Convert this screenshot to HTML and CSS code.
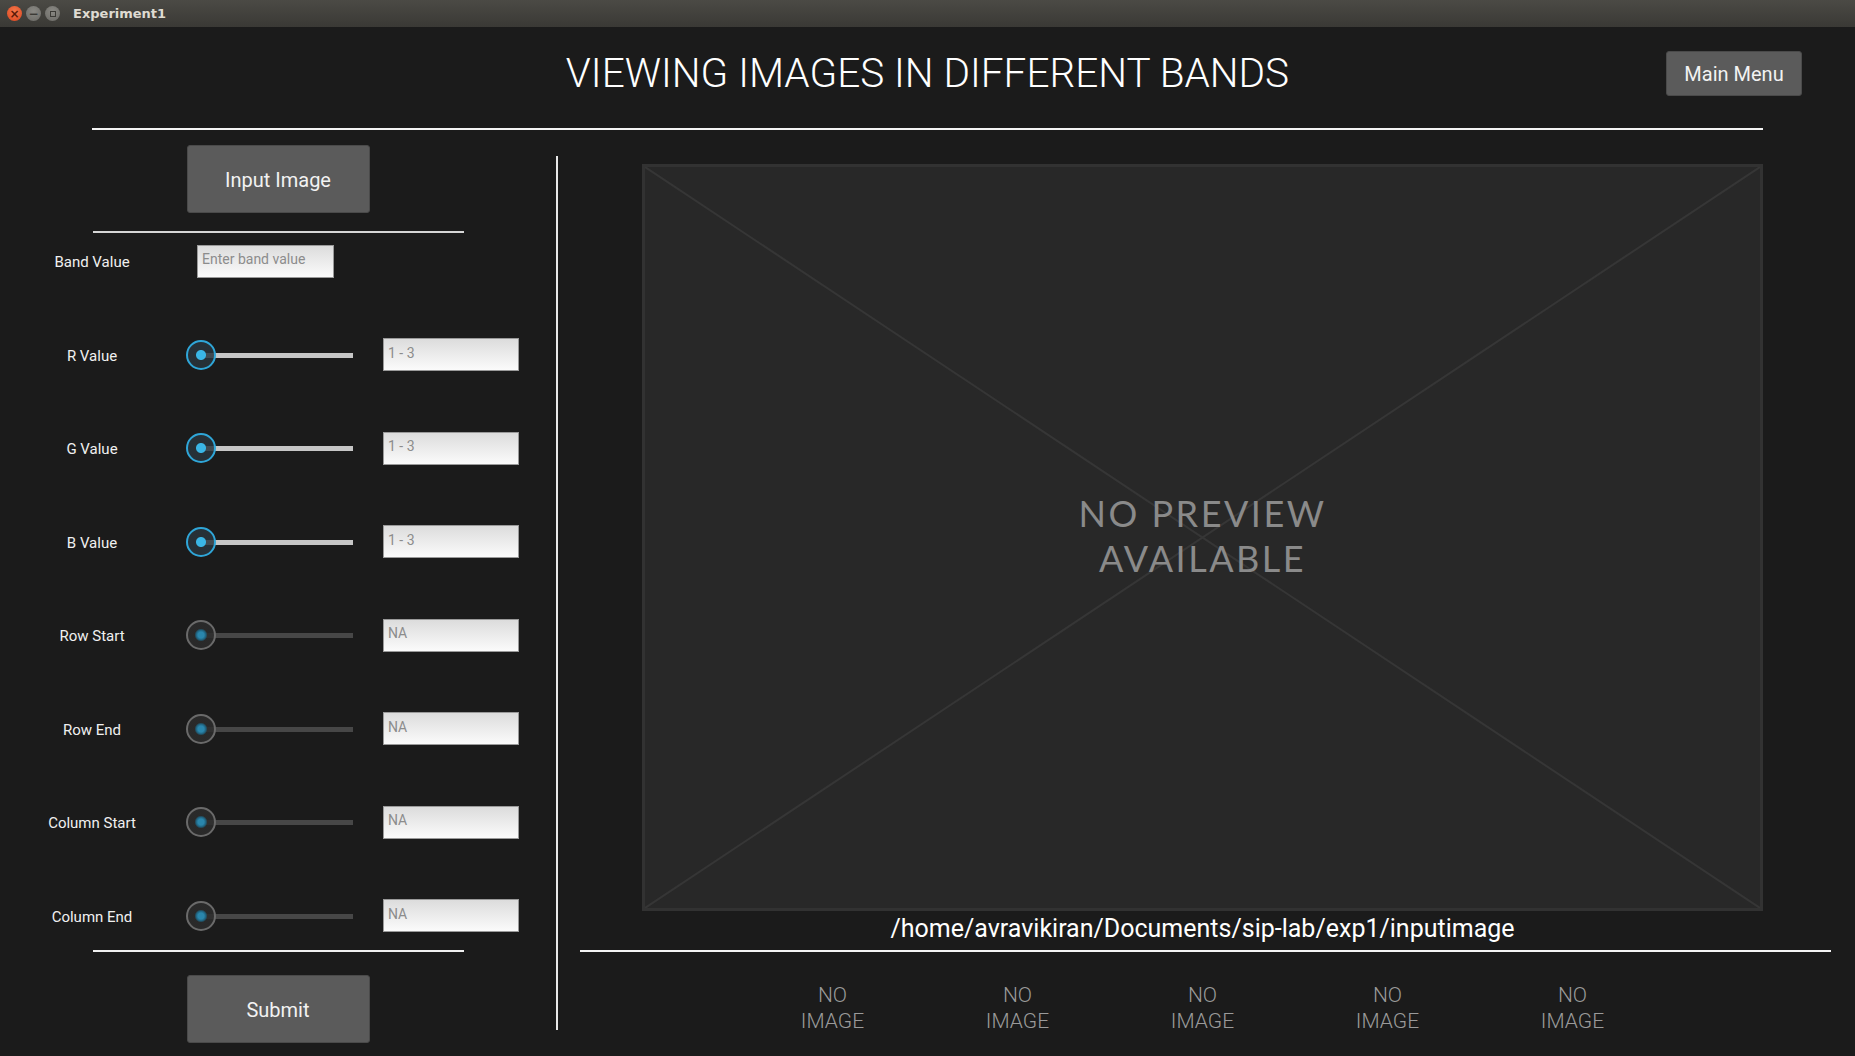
FILE: index.html
```html
<!DOCTYPE html>
<html lang="en">
<head>
    <meta charset="UTF-8">
    <title>Experiment1</title>
    <link rel="stylesheet" href="styles.css">
</head>
<body>
    <div class="titlebar">
        <div class="wbtn close">&times;</div>
        <div class="wbtn min">&minus;</div>
        <div class="wbtn max"><span class="sq"></span></div>
        <span class="wtitle">Experiment1</span>
    </div>

    <div class="app">
        <div class="header">
            <h1 class="title">VIEWING IMAGES IN DIFFERENT BANDS</h1>
            <button class="btn menu-btn">Main Menu</button>
        </div>
        <div class="hline"></div>

        <div class="main">
            <div class="left">
                <button class="btn big-btn">Input Image</button>
                <div class="sep"></div>

                <div class="rows">
                    <div class="row">
                        <span class="label">Band Value</span>
                        <input class="field band" placeholder="Enter band value">
                    </div>
                    <div class="row">
                        <span class="label">R Value</span>
                        <div class="slider"><div class="track"></div><div class="thumb"></div></div>
                        <input class="field" placeholder="1 - 3">
                    </div>
                    <div class="row">
                        <span class="label">G Value</span>
                        <div class="slider"><div class="track"></div><div class="thumb"></div></div>
                        <input class="field" placeholder="1 - 3">
                    </div>
                    <div class="row">
                        <span class="label">B Value</span>
                        <div class="slider"><div class="track"></div><div class="thumb"></div></div>
                        <input class="field" placeholder="1 - 3">
                    </div>
                    <div class="row">
                        <span class="label">Row Start</span>
                        <div class="slider off"><div class="track"></div><div class="thumb"></div></div>
                        <input class="field" placeholder="NA">
                    </div>
                    <div class="row">
                        <span class="label">Row End</span>
                        <div class="slider off"><div class="track"></div><div class="thumb"></div></div>
                        <input class="field" placeholder="NA">
                    </div>
                    <div class="row">
                        <span class="label">Column Start</span>
                        <div class="slider off"><div class="track"></div><div class="thumb"></div></div>
                        <input class="field" placeholder="NA">
                    </div>
                    <div class="row">
                        <span class="label">Column End</span>
                        <div class="slider off"><div class="track"></div><div class="thumb"></div></div>
                        <input class="field" placeholder="NA">
                    </div>
                </div>

                <div class="sep bottom"></div>
                <button class="btn big-btn">Submit</button>
            </div>

            <div class="vline"></div>

            <div class="right">
                <div class="preview">
                    <svg class="cross" viewBox="0 0 100 100" preserveAspectRatio="none">
                        <line x1="0" y1="0" x2="100" y2="100" vector-effect="non-scaling-stroke"/>
                        <line x1="100" y1="0" x2="0" y2="100" vector-effect="non-scaling-stroke"/>
                    </svg>
                    <div class="nopreview">NO PREVIEW<br>AVAILABLE</div>
                </div>
                <div class="path">/home/avravikiran/Documents/sip-lab/exp1/inputimage</div>
                <div class="hline2"></div>
                <div class="thumbs">
                    <div class="noimg">NO<br>IMAGE</div>
                    <div class="noimg">NO<br>IMAGE</div>
                    <div class="noimg">NO<br>IMAGE</div>
                    <div class="noimg">NO<br>IMAGE</div>
                    <div class="noimg">NO<br>IMAGE</div>
                </div>
            </div>
        </div>
    </div>
</body>
</html>
```

FILE: styles.css
```css
body {
    margin: 0;
    overflow: hidden;
    background: #1b1b1b;
    font-family: Roboto, "Liberation Sans", sans-serif;
    color: #f0f0f0;
}

.titlebar {
    height: 27px;
    display: flex;
    align-items: center;
    background: linear-gradient(#4b4a45, #3a3935);
    padding-left: 7px;
}
.wbtn {
    width: 15px;
    height: 15px;
    border-radius: 50%;
    margin-right: 4px;
    display: flex;
    align-items: center;
    justify-content: center;
    font: bold 12px "DejaVu Sans", sans-serif;
    color: #3b3a36;
    line-height: 1;
}
.wbtn.close { background: radial-gradient(circle at 50% 35%, #f5774a, #d9451f); color: #5a1a08; }
.wbtn.min, .wbtn.max { background: radial-gradient(circle at 50% 35%, #8a8984, #6a6965); }
.wbtn .sq { width: 6px; height: 6px; border: 1.5px solid #3b3a36; box-sizing: border-box; }
.wtitle {
    margin-left: 9px;
    font: bold 13px "DejaVu Sans", sans-serif;
    color: #dfdbd2;
}

.header {
    height: 101px;
    display: flex;
    align-items: center;
    justify-content: center;
    position: relative;
}
.title {
    margin: 0;
    font-size: 40.5px;
    font-weight: 300;
    color: #ffffff;
    padding-bottom: 9px;
}
.btn {
    background: #5b5b5b;
    border: 1px solid #4a4a4a;
    border-radius: 3px;
    color: #f2f2f2;
    font-family: Roboto, sans-serif;
    font-size: 20px;
    padding: 0;
}
.menu-btn {
    position: absolute;
    right: 53px;
    top: 24px;
    width: 136px;
    height: 45px;
}
.hline {
    height: 2px;
    background: #f4f4f4;
    margin: 0 92px;
}

.main {
    display: flex;
    height: 926px;
}
.left {
    width: 556px;
    display: flex;
    flex-direction: column;
    align-items: center;
    padding-top: 15px;
}
.big-btn {
    width: 183px;
    height: 68px;
    padding-top: 2px;
}
.sep {
    width: 371px;
    height: 2px;
    background: #d6d6d6;
    margin-top: 18px;
    margin-left: 1px;
}
.sep.bottom {
    margin-top: 17px;
    margin-bottom: 23px;
    background: #f0f0f0;
}

.rows {
    display: flex;
    flex-direction: column;
    gap: 59.5px;
    margin-top: 11px;
    align-self: stretch;
}
.row {
    height: 34px;
    display: flex;
    align-items: center;
}
.label {
    width: 130px;
    margin-left: 27px;
    text-align: center;
    font-size: 15px;
    color: #f0f0f0;
    padding-top: 2px;
}
.slider {
    position: relative;
    width: 167px;
    height: 30px;
    margin-left: 29px;
}
.slider .track {
    position: absolute;
    left: 14px;
    right: 0;
    top: 13px;
    height: 5px;
    background: #c6c6c6;
}
.slider .thumb {
    position: absolute;
    left: 0;
    top: 0;
    width: 30px;
    height: 30px;
    box-sizing: border-box;
    border-radius: 50%;
    border: 2.5px solid #2fa6d8;
    background: radial-gradient(circle, #3ab6e6 0 4.5px, rgba(40, 52, 60, 0.85) 5.5px);
}
.slider.off .track { background: #474747; }
.slider.off .thumb {
    border-color: #6a6a6a;
    background: radial-gradient(circle, #2a86ac 0 3px, #1f5f7a 5px, rgba(44, 44, 44, 0.85) 6.5px);
}
.field {
    width: 136px;
    height: 33px;
    box-sizing: border-box;
    margin-left: 30px;
    border: 1px solid #9a9a9a;
    background: linear-gradient(#dcdcdc, #fbfbfb);
    font-family: Roboto, sans-serif;
    font-size: 14px;
    padding: 0 4px 4px;
    outline: none;
}
.field::placeholder { color: #8c8c8c; }
.field.band {
    margin-left: 40px;
    width: 137px;
}

.vline {
    width: 2px;
    background: #e8e8e8;
    margin-top: 26px;
    height: 874px;
}

.right {
    flex: 1;
    display: flex;
    flex-direction: column;
    align-items: center;
    padding-right: 8px;
    padding-top: 34px;
}
.preview {
    position: relative;
    width: 1121px;
    height: 747px;
    box-sizing: border-box;
    background: #282828;
    border: 3px solid #323232;
}
.cross {
    position: absolute;
    inset: 0;
    width: 100%;
    height: 100%;
}
.cross line { stroke: #363636; stroke-width: 2; }
.nopreview {
    position: absolute;
    inset: 0;
    display: flex;
    align-items: center;
    justify-content: center;
    text-align: center;
    font-family: Lato, sans-serif;
    font-size: 36px;
    line-height: 45px;
    letter-spacing: 2.5px;
    color: #8a8a8a;
    padding-bottom: 4px;
}
.path {
    font-size: 25px;
    line-height: 28px;
    margin-top: 4px;
    color: #ffffff;
}
.hline2 {
    width: 1251px;
    height: 2px;
    background: #f4f4f4;
    margin-top: 7px;
    margin-left: 5px;
}
.thumbs {
    display: flex;
    margin-top: 30px;
}
.noimg {
    width: 185px;
    text-align: center;
    font-size: 21px;
    line-height: 26px;
    font-weight: 300;
    color: #9a9a9a;
}
```
